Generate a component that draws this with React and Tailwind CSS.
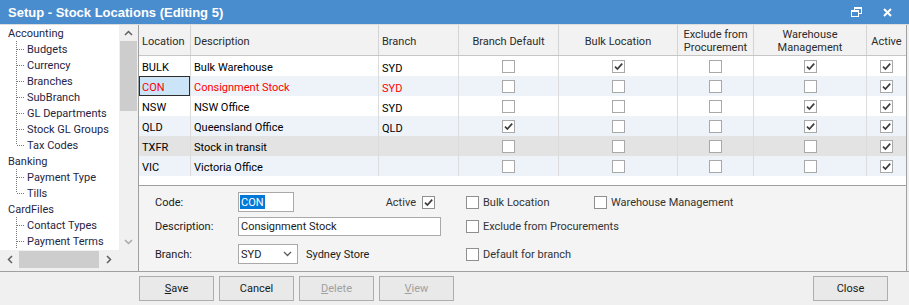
import React from "react";

const cols = [
  { w: "w-[51px]", label: ["Location"], align: "left" },
  { w: "w-[188px]", label: ["Description"], align: "left" },
  { w: "w-[80px]", label: ["Branch"], align: "left" },
  { w: "w-[100px]", label: ["Branch Default"], align: "center" },
  { w: "w-[119px]", label: ["Bulk Location"], align: "center" },
  { w: "w-[76px]", label: ["Exclude from", "Procurement"], align: "center" },
  { w: "w-[113px]", label: ["Warehouse", "Management"], align: "center" },
  { w: "w-[40px]", label: ["Active"], align: "center" },
];

const rows = [
  { code: "BULK", desc: "Bulk Warehouse", branch: "SYD", checks: [0, 1, 0, 1, 1], bg: "bg-white" },
  { code: "CON", desc: "Consignment Stock", branch: "SYD", checks: [0, 0, 0, 0, 1], bg: "bg-[#eef3fa]", red: true, sel: true },
  { code: "NSW", desc: "NSW Office", branch: "SYD", checks: [0, 0, 0, 1, 1], bg: "bg-white" },
  { code: "QLD", desc: "Queensland Office", branch: "QLD", checks: [1, 0, 0, 1, 1], bg: "bg-[#eef3fa]" },
  { code: "TXFR", desc: "Stock in transit", branch: "", checks: [0, 0, 0, 0, 1], bg: "bg-[#e3e3e3]" },
  { code: "VIC", desc: "Victoria Office", branch: "", checks: [0, 0, 0, 0, 1], bg: "bg-[#eef3fa]" },
];

const tree = [
  { label: "Accounting", children: ["Budgets", "Currency", "Branches", "SubBranch", "GL Departments", "Stock GL Groups", "Tax Codes"] },
  { label: "Banking", children: ["Payment Type", "Tills"] },
  { label: "CardFiles", children: ["Contact Types", "Payment Terms"], open: true },
];

function Check({ on, size = 13, border = "#a9a9a9" }) {
  return (
    <svg width={size} height={size} viewBox="0 0 13 13" className="shrink-0 block">
      <rect x="0.5" y="0.5" width="12" height="12" fill="#fff" stroke={border} />
      {on ? (
        <path d="M3 6.6 L5.4 9 L10.2 3.6" fill="none" stroke="#3c3c3c" strokeWidth="1.7" />
      ) : null}
    </svg>
  );
}

function TreeLine({ last }) {
  return (
    <svg width="27" height="16" className="shrink-0 block">
      <line x1="16.5" y1="0" x2="16.5" y2={last ? 8 : 16} stroke="#7a7a7a" strokeDasharray="1 1" />
      <line x1="17" y1="8.5" x2="25" y2="8.5" stroke="#7a7a7a" strokeDasharray="1 1" />
    </svg>
  );
}

function Btn({ children, disabled, w = "w-[75px]" }) {
  return (
    <div
      className={`${w} h-[25px] flex items-center justify-center border border-[#adadad] bg-[#e9e9e9] ${
        disabled ? "text-[#a0a0a0]" : "text-[#1a1a1a]"
      }`}
    >
      {children}
    </div>
  );
}

export default function App() {
  return (
    <div className="w-[909px] h-[305px] overflow-hidden bg-[#f0f0f0] flex flex-col font-['Roboto',sans-serif] text-[11px] leading-none text-black">
      {/* Title bar */}
      <div className="h-[25px] shrink-0 bg-[#4a8dcf] flex items-center pl-[8px] pr-[17px] border-b border-[#dcdcdc]">
        <div className="font-['Liberation_Sans',sans-serif] font-bold text-[13px] text-white">
          Setup - Stock Locations (Editing 5)
        </div>
        <div className="ml-auto flex items-center gap-[21px]">
          <svg width="11" height="10" viewBox="0 0 11 10">
            <rect x="3.5" y="0.5" width="7" height="6" fill="none" stroke="#fff" />
            <rect x="3" y="0" width="8" height="2" fill="#fff" />
            <rect x="0.5" y="3.5" width="7" height="6" fill="#4a8dcf" stroke="#fff" />
            <rect x="0" y="3" width="8" height="2" fill="#fff" />
          </svg>
          <svg width="9" height="9" viewBox="0 0 9 9">
            <path d="M1 1 L8 8 M8 1 L1 8" stroke="#fff" strokeWidth="2" />
          </svg>
        </div>
      </div>

      {/* Main */}
      <div className="flex h-[246px] shrink-0">
        {/* Left panel */}
        <div className="w-[139px] shrink-0 flex flex-col border-r border-[#a0a0a0] bg-[#f0f0f0]">
          <div className="flex h-[225px]">
            <div className="w-[119px] bg-white overflow-hidden text-[#1f2544]">
              {tree.map((g) => (
                <div key={g.label}>
                  <div className="h-[16px] flex items-center pl-[8px] pt-[1px]">{g.label}</div>
                  {g.children.map((c, i) => (
                    <div key={c} className="h-[16px] flex items-center whitespace-nowrap">
                      <TreeLine last={i === g.children.length - 1 && !g.open} />
                      <span className="pt-[1px]">{c}</span>
                    </div>
                  ))}
                </div>
              ))}
            </div>
            <div className="w-[18px] bg-[#f0f0f0] flex flex-col items-center">
              <div className="h-[16px] flex items-center justify-center">
                <svg width="9" height="6" viewBox="0 0 9 6">
                  <path d="M1 5 L4.5 1.5 L8 5" fill="none" stroke="#606060" strokeWidth="1.5" />
                </svg>
              </div>
              <div className="w-[17px] h-[70px] bg-[#cdcdcd]" />
              <div className="flex-1" />
              <div className="h-[16px] flex items-center justify-center">
                <svg width="9" height="6" viewBox="0 0 9 6">
                  <path d="M1 1 L4.5 4.5 L8 1" fill="none" stroke="#a8a8a8" strokeWidth="1.5" />
                </svg>
              </div>
            </div>
          </div>
          <div className="flex h-[18px]">
            <div className="w-[119px] flex items-center bg-[#f0f0f0]">
              <div className="w-[19px] flex justify-center">
                <svg width="6" height="9" viewBox="0 0 6 9">
                  <path d="M5 1 L1.5 4.5 L5 8" fill="none" stroke="#606060" strokeWidth="1.5" />
                </svg>
              </div>
              <div className="w-[80px] h-[17px] bg-[#cdcdcd]" />
              <div className="flex-1 flex justify-center">
                <svg width="6" height="9" viewBox="0 0 6 9">
                  <path d="M1 1 L4.5 4.5 L1 8" fill="none" stroke="#606060" strokeWidth="1.5" />
                </svg>
              </div>
            </div>
            <div className="w-[18px] bg-[#f0f0f0]" />
          </div>
        </div>

        {/* Right panel */}
        <div className="w-[768px] shrink-0 flex flex-col border-r border-[#a0a0a0]">
          {/* Table */}
          <div className="h-[161px] shrink-0 bg-white border-b border-[#a0a0a0] flex flex-col">
            <div className="h-[31px] flex bg-[#f2f2f2] border-b border-[#c6c6c6] text-[#2b2b2b]">
              {cols.map((c, i) => (
                <div
                  key={i}
                  className={`${c.w} shrink-0 flex flex-col justify-center gap-[2px] pt-[2px] ${
                    i > 0 ? "border-l border-[#d4d4d4]" : ""
                  } ${c.align === "center" ? "items-center text-center" : "pl-[3px]"}`}
                >
                  {c.label.map((l) => (
                    <div key={l} className="whitespace-nowrap">
                      {l}
                    </div>
                  ))}
                </div>
              ))}
            </div>
            {rows.map((r) => (
              <div key={r.code} className={`h-[20px] flex ${r.bg} ${r.red ? "text-[#ff0000]" : "text-black"}`}>
                <div
                  className={`w-[51px] shrink-0 flex items-center pt-[2px] ${
                    r.sel ? "bg-[#cce4f7] border border-[#2d2d2d] pl-[2px]" : "pl-[3px]"
                  }`}
                >
                  {r.code}
                </div>
                <div className="w-[188px] shrink-0 flex items-center pl-[3px] pt-[2px] border-l border-[#dcdcdc]">{r.desc}</div>
                <div className="w-[80px] shrink-0 flex items-center pl-[3px] pt-[4px] border-l border-[#dcdcdc]">{r.branch}</div>
                {r.checks.map((c, j) => (
                  <div
                    key={j}
                    className={`${cols[j + 3].w} shrink-0 flex items-center justify-center border-l border-[#dcdcdc]`}
                  >
                    <Check on={c} />
                  </div>
                ))}
              </div>
            ))}
          </div>

          {/* Form */}
          <div className="flex-1 bg-[#f4f4f4] flex pl-[16px] pt-[6px] text-[#1b1b1b]">
            <div className="w-[286px] flex flex-col gap-[4px]">
              <div className="h-[20px] flex items-center">
                <div className="w-[83px] pt-[1px]">Code:</div>
                <div className="w-[56px] h-[20px] bg-white border border-[#a9a9a9] flex items-center pl-[1px]">
                  <span className="bg-[#0078d7] text-white px-[1px] h-[14px] flex items-center">CON</span>
                </div>
                <div className="ml-auto flex items-center gap-[6px] pr-[6px]">
                  <span className="text-[#333] pt-[1px]">Active</span>
                  <Check on={1} border="#8f8f8f" />
                </div>
              </div>
              <div className="h-[20px] flex items-center">
                <div className="w-[83px] pt-[1px]">Description:</div>
                <div className="w-[203px] h-[19px] bg-white border border-[#a9a9a9] flex items-center pl-[2px]">
                  Consignment Stock
                </div>
              </div>
              <div className="h-[20px] flex items-center mt-[4px]">
                <div className="w-[83px] pt-[1px]">Branch:</div>
                <div className="w-[60px] h-[20px] bg-white border border-[#a9a9a9] flex items-center pl-[2px]">
                  <span>SYD</span>
                  <svg width="9" height="6" viewBox="0 0 9 6" className="ml-auto mr-[5px]">
                    <path d="M1 1 L4.5 4.5 L8 1" fill="none" stroke="#5a5a5a" strokeWidth="1.3" />
                  </svg>
                </div>
                <span className="ml-[8px]">Sydney Store</span>
              </div>
            </div>
            <div className="ml-[25px] flex flex-col gap-[4px] text-[#333]">
              <div className="h-[20px] flex items-center">
                <div className="w-[128px] flex items-center gap-[4px]">
                  <Check on={0} border="#8f8f8f" />
                  <span>Bulk Location</span>
                </div>
                <div className="flex items-center gap-[4px]">
                  <Check on={0} border="#8f8f8f" />
                  <span>Warehouse Management</span>
                </div>
              </div>
              <div className="h-[20px] flex items-center gap-[4px]">
                <Check on={0} border="#8f8f8f" />
                <span>Exclude from Procurements</span>
              </div>
              <div className="h-[20px] flex items-center gap-[4px] mt-[4px]">
                <Check on={0} border="#8f8f8f" />
                <span>Default for branch</span>
              </div>
            </div>
          </div>
        </div>
      </div>

      {/* Bottom bar */}
      <div className="flex-1 border-t border-[#a0a0a0] flex items-start pt-[4px] pr-[21px]">
        <div className="w-[139px] shrink-0" />
        <div className="flex gap-[5px]">
          <Btn>
            <span><u>S</u>ave</span>
          </Btn>
          <Btn>Cancel</Btn>
          <Btn disabled>
            <span><u>D</u>elete</span>
          </Btn>
          <Btn disabled>
            <span><u>V</u>iew</span>
          </Btn>
        </div>
        <div className="ml-auto">
          <Btn>Close</Btn>
        </div>
      </div>
    </div>
  );
}
